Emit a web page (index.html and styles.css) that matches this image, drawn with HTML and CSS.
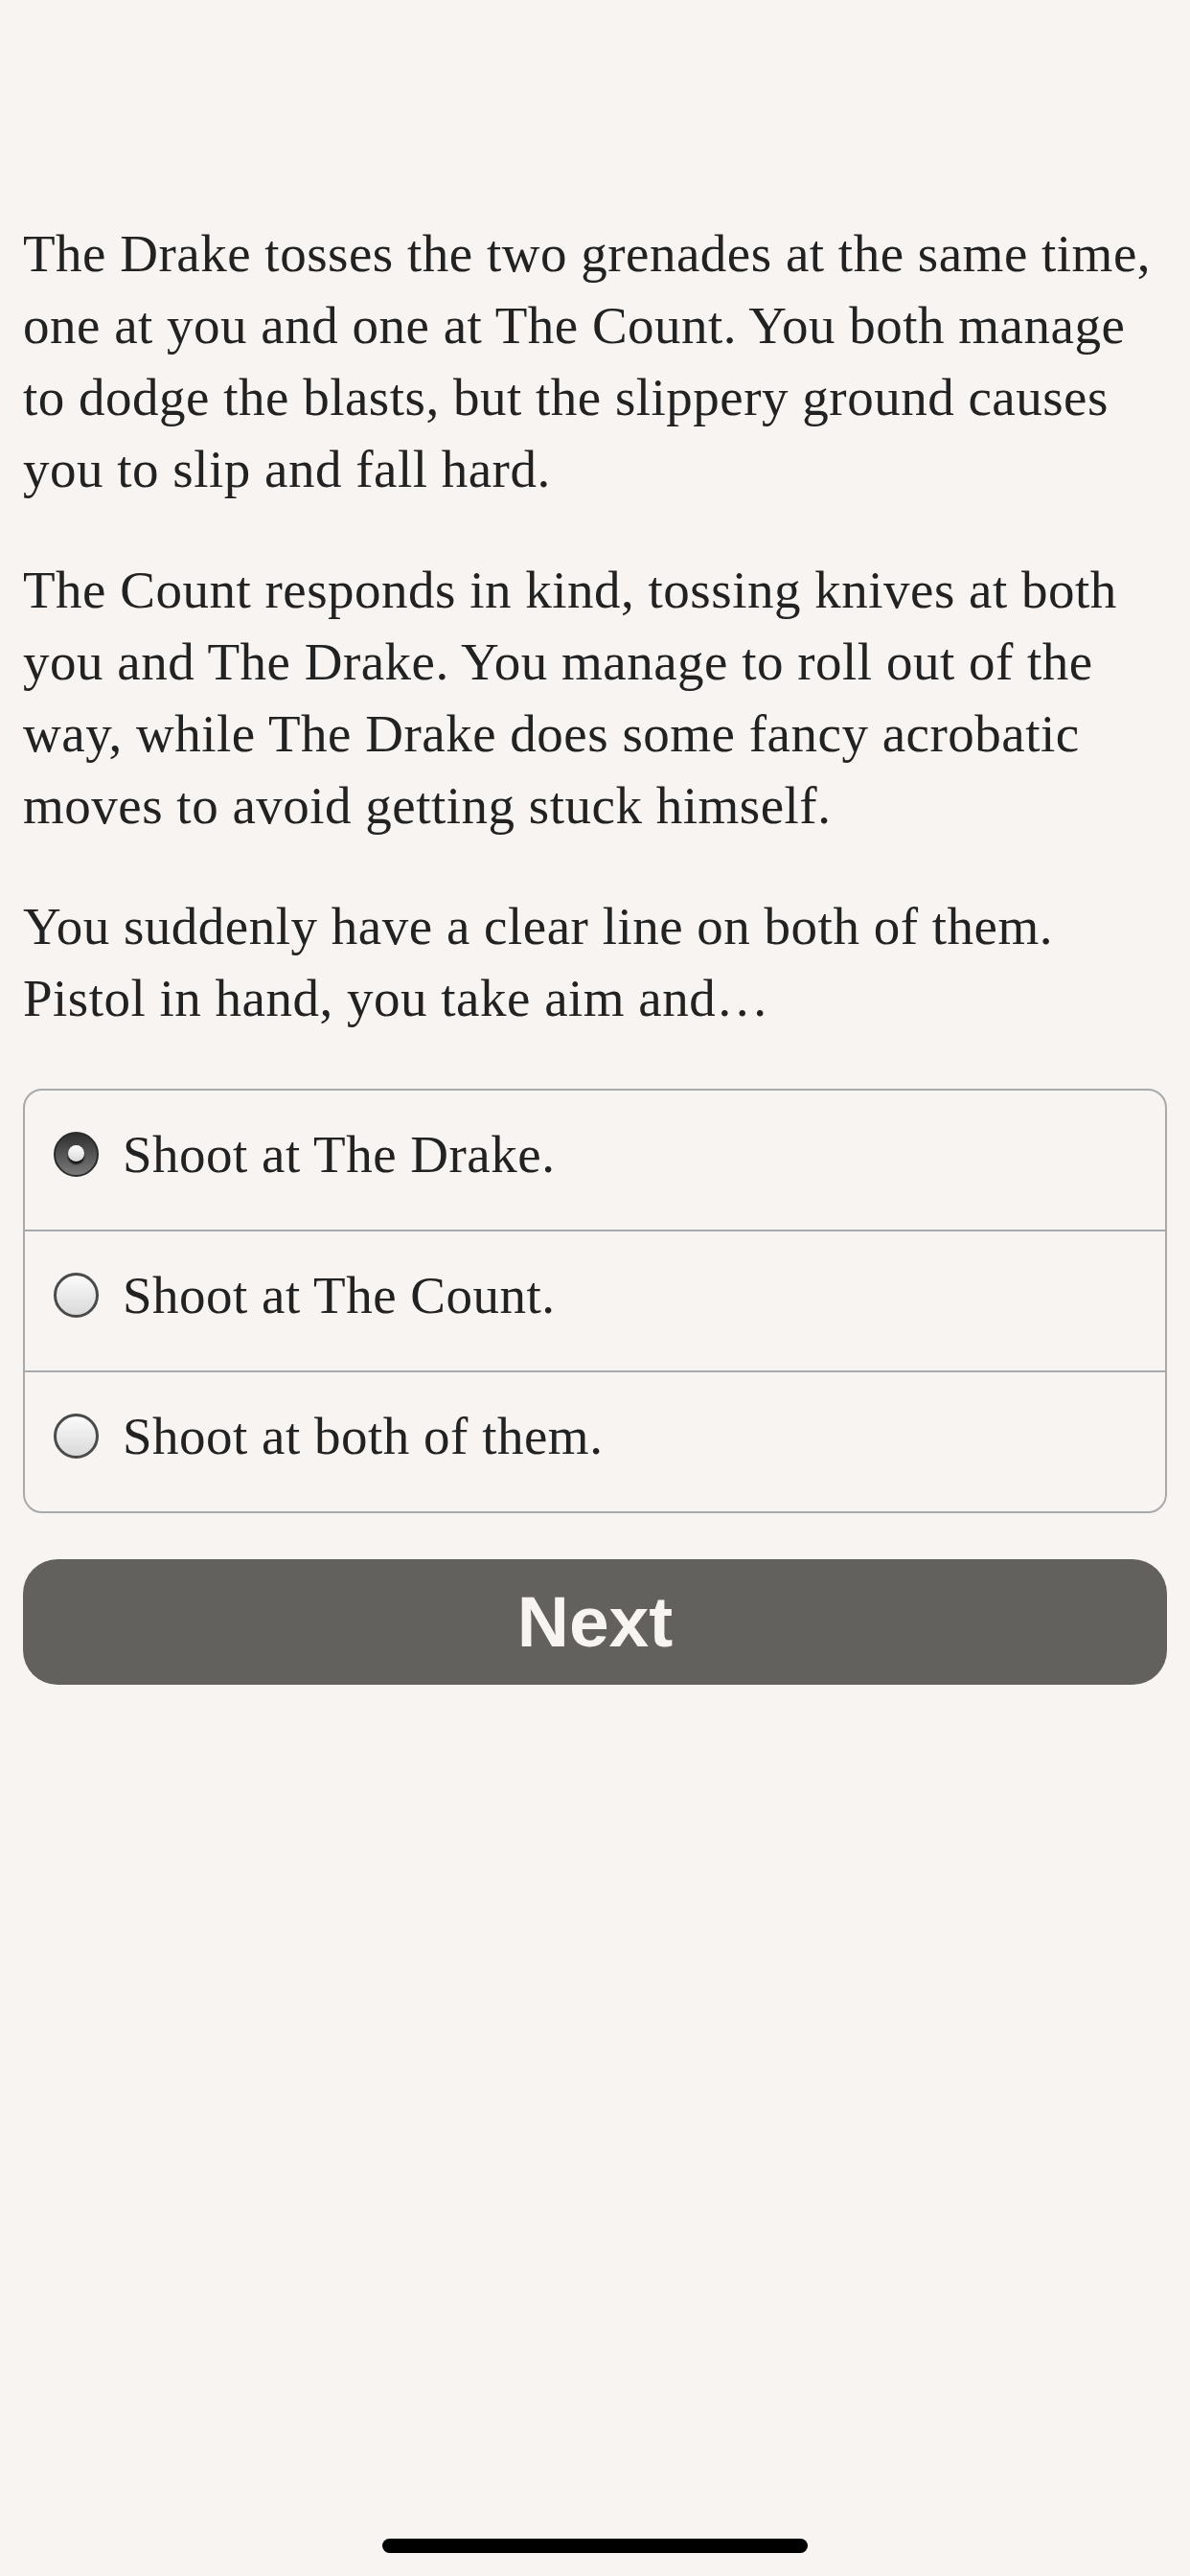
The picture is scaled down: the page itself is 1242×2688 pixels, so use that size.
FILE: index.html
```html
<!DOCTYPE html>
<html lang="en">
<head>
<meta charset="utf-8">
<title>Story</title>
<link rel="stylesheet" href="styles.css">
</head>
<body>
<main class="page">
  <section class="story">
    <p>The Drake tosses the two grenades at the same time, one at you and one at The Count. You both manage to dodge the blasts, but the slippery ground causes you to slip and fall hard.</p>
    <p>The Count responds in kind, tossing knives at both you and The Drake. You manage to roll out of the way, while The Drake does some fancy acrobatic moves to avoid getting stuck himself.</p>
    <p>You suddenly have a clear line on both of them. Pistol in hand, you take aim and…</p>
  </section>
  <div class="choices">
    <label class="choice">
      <span class="radio radio-on"><span class="dot"></span></span>
      <span class="choice-text">Shoot at The Drake.</span>
    </label>
    <label class="choice">
      <span class="radio"></span>
      <span class="choice-text">Shoot at The Count.</span>
    </label>
    <label class="choice">
      <span class="radio"></span>
      <span class="choice-text">Shoot at both of them.</span>
    </label>
  </div>
  <button class="next">Next</button>
</main>
<div class="home-indicator"></div>
</body>
</html>
```
FILE: styles.css
```css
html, body {
  margin: 0;
  padding: 0;
}
body {
  background: #f7f4f1;
  width: 1242px;
  height: 2688px;
  overflow: hidden;
  font-family: "Liberation Serif", "Times New Roman", serif;
  color: #222222;
}
.page {
  padding: 227px 24px 0 24px;
  display: flex;
  flex-direction: column;
}
.story p {
  margin: 0 0 51px 0;
  font-size: 55px;
  letter-spacing: 0.5px;
  line-height: 75px;
}
.story p:last-child {
  margin-bottom: 57px;
}
.choices {
  border: 2px solid #a8a9ab;
  border-radius: 20px;
  display: flex;
  flex-direction: column;
}
.choice {
  height: 145px;
  box-sizing: border-box;
  display: flex;
  align-items: center;
  padding: 0 0 12px 30px;
  gap: 25px;
}
.choice + .choice {
  border-top: 2px solid #a8a9ab;
  height: 147px;
}
.choice-text {
  font-size: 55px;
  letter-spacing: 0.5px;
  line-height: 75px;
}
.radio {
  width: 47px;
  height: 47px;
  box-sizing: border-box;
  border-radius: 50%;
  border: 3px solid #4a4a4a;
  background: linear-gradient(#fbfbfb, #d9d9d9);
  flex: none;
  display: flex;
  align-items: center;
  justify-content: center;
}
.radio-on {
  border: 2px solid #2b2b2b;
  background: linear-gradient(#2f2f2f, #7a7a7a);
}
.dot {
  width: 17px;
  height: 17px;
  border-radius: 50%;
  background: linear-gradient(#ffffff, #d8d8d8);
  box-shadow: 0 3px 2px #111111;
  margin-top: -3px;
}
.next {
  margin-top: 48px;
  height: 131px;
  border: none;
  border-radius: 36px;
  background: #63615e;
  color: #f7f4f1;
  font-family: "Liberation Sans", Arial, sans-serif;
  font-weight: bold;
  font-size: 75px;
  padding: 0;
  line-height: 131px;
}
.home-indicator {
  position: fixed;
  left: 399px;
  top: 2649px;
  width: 444px;
  height: 15px;
  border-radius: 8px;
  background: #000000;
}
```
